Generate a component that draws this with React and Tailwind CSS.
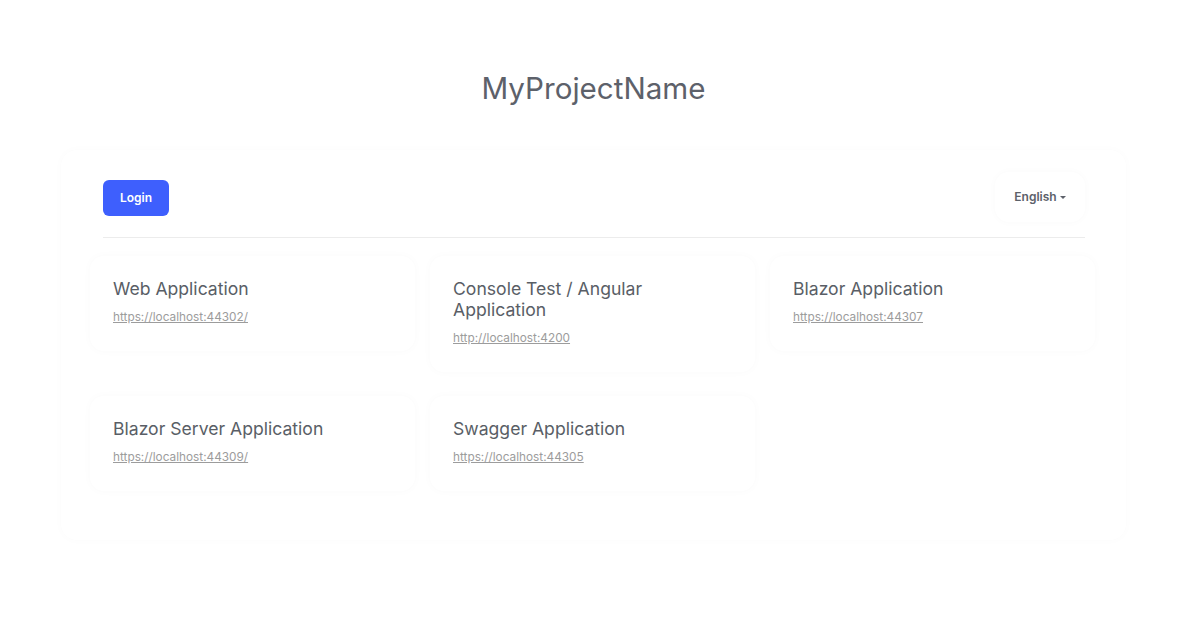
import React from "react";

const apps = [
  { name: "Web Application", url: "https://localhost:44302/" },
  { name: "Console Test / Angular Application", url: "http://localhost:4200" },
  { name: "Blazor Application", url: "https://localhost:44307" },
  { name: "Blazor Server Application", url: "https://localhost:44309/" },
  { name: "Swagger Application", url: "https://localhost:44305" },
];

export default function App() {
  return (
    <div className="min-h-[618px] bg-white font-['Inter',sans-serif] text-[#5b5f66]">
      <div className="pt-[68px] ml-[61px] w-[1065px]">
        <h1 className="text-center text-[29.6px] leading-[40px] font-normal text-[#5d616a]">MyProjectName</h1>
        <div className="mt-[42px] rounded-[16px] bg-white shadow-[0_0_10px_rgba(0,0,0,0.018)] pl-[42px] pr-[41px] pt-[22px] pb-[49px]">
          <div className="flex items-center justify-between">
            <button className="mt-[2px] h-[36px] w-[66px] rounded-[6px] bg-[#3e5ffd] text-[12px] font-semibold text-white">Login</button>
            <button className="flex h-[50px] w-[90px] items-center justify-center gap-[3px] rounded-[14px] bg-white shadow-[0_0_8px_rgba(0,0,0,0.022)] text-[12px] font-semibold text-[#5d616a]">
              English
              <span className="inline-block h-0 w-0 border-x-[3px] border-t-[3px] border-x-transparent border-t-[#5d616a]"></span>
            </button>
          </div>
          <div className="mt-[15px] h-px bg-[#ececec]"></div>
          <div className="mt-[18px] -mx-[13px] grid grid-cols-[325px_325px_325px] gap-x-[15px] gap-y-[24px] items-start">
            {apps.map((a) => (
              <div key={a.name} className="rounded-[14px] bg-white shadow-[0_0_10px_rgba(0,0,0,0.025)] pl-[23px] pr-[40px] pt-[22px] pb-[26px]">
                <div className="text-[17.6px] leading-[21px] font-normal text-[#595e66]">{a.name}</div>
                <a href="#" className="mt-[10px] block text-[11.8px] leading-[16px] text-[#9c9c9c] underline">{a.url}</a>
              </div>
            ))}
          </div>
        </div>
      </div>
    </div>
  );
}
